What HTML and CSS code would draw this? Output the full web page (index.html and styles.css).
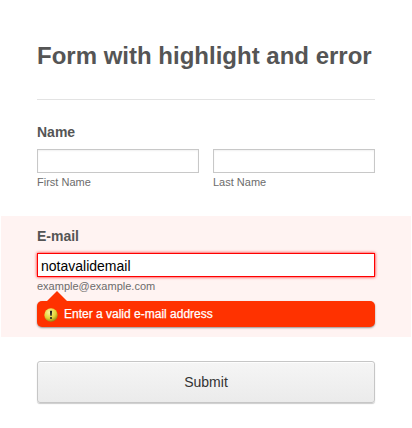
FILE: index.html
```html
<!DOCTYPE html>
<html lang="en">
<head>
<meta charset="utf-8">
<title>Form with highlight and error</title>
<link rel="stylesheet" href="styles.css">
</head>
<body>
<form class="form">
  <header class="header"><h1>Form with highlight and error</h1></header>
  <section class="group name">
    <label class="label" for="first">Name</label>
    <div class="columns">
      <div class="field"><input id="first" class="input" type="text"><span class="hint">First Name</span></div>
      <div class="field"><input class="input" type="text"><span class="hint">Last Name</span></div>
    </div>
  </section>
  <section class="group email">
    <label class="label" for="email">E-mail</label>
    <div class="field"><input id="email" class="input invalid" type="text" value="notavalidemail"><span class="hint">example@example.com</span></div>
    <div class="error">
      <svg class="icon" viewBox="0 0 14 14">
        <defs><radialGradient id="g" cx=".4" cy=".3" r=".75"><stop offset="0" stop-color="#fbf6a0"/><stop offset=".6" stop-color="#e3d335"/><stop offset="1" stop-color="#8a7a10"/></radialGradient></defs>
        <circle cx="7" cy="7" r="6.7" fill="url(#g)"/>
        <path d="M5.9 2.8h2.2l-.4 5h-1.4z" fill="#222"/><circle cx="7" cy="10" r="1.1" fill="#222"/>
      </svg>
      <span class="message">Enter a valid e-mail address</span>
    </div>
  </section>
  <div class="actions"><button class="submit" type="button">Submit</button></div>
</form>
</body>
</html>
```
FILE: styles.css
```css
* { box-sizing: border-box; }
body { margin: 0; background: #fff; color: #555; font-family: "Liberation Sans", Arial, sans-serif; }
.form { width: 412px; height: 428px; overflow: hidden; }
.header { margin: 0 37px; height: 100px; padding-top: 41px; border-bottom: 1px solid #e3e3e3; }
h1 { margin: 0; font-size: 24px; line-height: 29px; white-space: nowrap; }
.group { padding: 0 36px; margin: 0 1px; }
.name { height: 116px; padding-top: 24px; }
.label { display: block; font-size: 14px; line-height: 17px; font-weight: bold; }
.columns { display: grid; grid-template-columns: 1fr 1fr; gap: 14px; margin-top: 8px; }
.field { display: flex; flex-direction: column; }
.input { width: 100%; height: 24px; border: 1px solid #c8c8c8; background: #fff; padding: 3px 3px 1px; font: 14px "Liberation Sans", Arial, sans-serif; color: #000; outline: 0; box-shadow: inset 0 1px 2px #f1f1f1; }
.hint { font-size: 11px; line-height: 13px; margin-top: 3px; color: #6c6c6c; }
.email { height: 121px; padding-top: 12px; background: #fff3f2; }
.email .field { margin-top: 8px; }
.invalid { border-color: #f00; box-shadow: 0 0 3px #f00; }
.error { position: relative; display: flex; align-items: center; height: 26px; margin-top: 8px; padding-left: 7px; gap: 6px; border-radius: 5px; background: #ff3200; color: #fff; font-size: 12px; box-shadow: 0 1px 2px rgba(0, 0, 0, .4); }
.error::before { content: ""; position: absolute; left: 10px; top: -10px; border: 10px solid transparent; border-top: 0; border-bottom-color: #ff3200; }
.icon { width: 14px; height: 14px; margin-top: 2px; }
.message { -webkit-text-stroke: .25px #fff; }
.actions { padding: 24px 37px 0; }
.submit { display: block; width: 100%; height: 42px; border: 1px solid #c6c6c6; border-radius: 3px; background: linear-gradient(#f5f5f5, #ebebeb); box-shadow: 0 1px 1px #ccc, inset 0 1px 0 #fdfdfd; font: 14px "Liberation Sans", Arial, sans-serif; color: #333; }
```
